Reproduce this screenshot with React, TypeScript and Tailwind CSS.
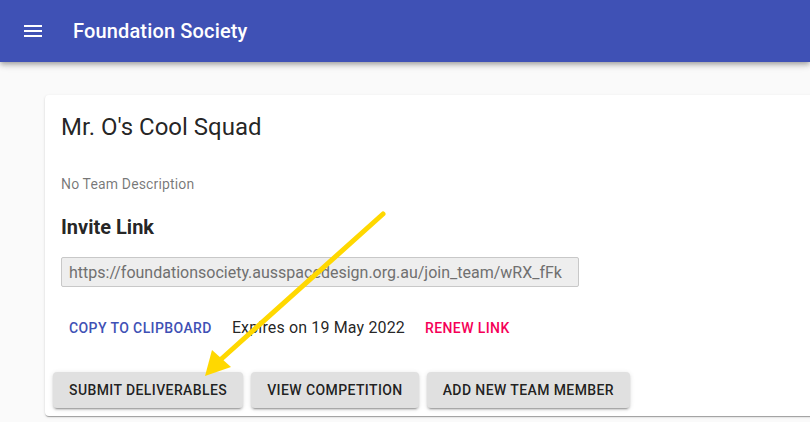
import React from "react";

function MenuIcon() {
  return (
    <svg width="24" height="24" viewBox="0 0 24 24" fill="white">
      <path d="M3 18h18v-2H3v2zm0-5h18v-2H3v2zm0-7v2h18V6H3z" />
    </svg>
  );
}

export default function App() {
  return (
    <div
      className="relative w-[810px] h-[422px] overflow-hidden bg-[#fafafa]"
      style={{ fontFamily: "Roboto, 'Liberation Sans', sans-serif" }}
    >
      <header className="relative z-10 h-[62px] bg-[#3f51b5] flex items-center shadow-[0_2px_4px_-1px_rgba(0,0,0,0.2),0_4px_5px_0_rgba(0,0,0,0.14),0_1px_10px_0_rgba(0,0,0,0.12)]">
        <div className="ml-[21px] w-[24px] h-[24px] flex items-center justify-center">
          <MenuIcon />
        </div>
        <div className="ml-[28px] text-white text-[20px] font-medium leading-[32px] tracking-[0.15px]">
          Foundation Society
        </div>
      </header>

      <main className="pt-[33px] pl-[45px]">
        <div className="w-[900px] bg-white rounded-[4px] shadow-[0_2px_1px_-1px_rgba(0,0,0,0.2),0_1px_1px_0_rgba(0,0,0,0.14),0_1px_3px_0_rgba(0,0,0,0.12)]">
          <div className="pt-[16px] px-[16px]">
            <div className="text-[24px] leading-[32px] text-[rgba(0,0,0,0.87)]">
              Mr. O's Cool Squad
            </div>
            <div className="mt-[31px] text-[14px] leading-[20px] text-[rgba(0,0,0,0.54)] tracking-[0.15px]">
              No Team Description
            </div>
            <div className="mt-[19px] text-[20px] leading-[28px] font-bold text-[rgba(0,0,0,0.87)]">
              Invite Link
            </div>
            <input
              readOnly
              value="https://foundationsociety.ausspacedesign.org.au/join_team/wRX_fFk"
              className="mt-[16px] block w-[518px] h-[30px] bg-[#eeeeee] border border-[#c8c8c8] rounded-[2px] pl-[7px] text-[16px] text-[#707070] outline-none"
              style={{ fontFamily: "Roboto, 'Liberation Sans', sans-serif" }}
            />
            <div className="mt-[23px] flex items-center h-[36px]">
              <button className="h-[36px] px-[8px] rounded-[4px] text-[14px] font-medium tracking-[0.4px] text-[#3f51b5] uppercase">
                Copy to Clipboard
              </button>
              <span className="ml-[12px] text-[16px] text-[rgba(0,0,0,0.87)] tracking-[0.15px]">
                Expires on 19 May 2022
              </span>
              <button className="ml-[12px] h-[36px] px-[8px] rounded-[4px] text-[14px] font-medium tracking-[0.4px] text-[#f50057] uppercase">
                Renew Link
              </button>
            </div>
          </div>
          <div className="mt-[18px] p-[8px] flex gap-[8px]">
            {["Submit Deliverables", "View Competition", "Add New Team Member"].map((t) => (
              <button
                key={t}
                className="h-[36px] px-[16px] rounded-[4px] bg-[#e0e0e0] text-[14px] font-medium tracking-[0.4px] uppercase text-[rgba(0,0,0,0.87)] shadow-[0_3px_1px_-2px_rgba(0,0,0,0.2),0_2px_2px_0_rgba(0,0,0,0.14),0_1px_5px_0_rgba(0,0,0,0.12)]"
              >
                {t}
              </button>
            ))}
          </div>
        </div>
      </main>

      <svg
        className="absolute left-0 top-0 pointer-events-none"
        width="810"
        height="422"
        viewBox="0 0 810 422"
      >
        <line x1="383" y1="214" x2="218" y2="362" stroke="#ffd800" strokeWidth="5" strokeLinecap="round" />
        <polygon points="205,376 212,350 231,367" fill="#ffd800" />
      </svg>
    </div>
  );
}
